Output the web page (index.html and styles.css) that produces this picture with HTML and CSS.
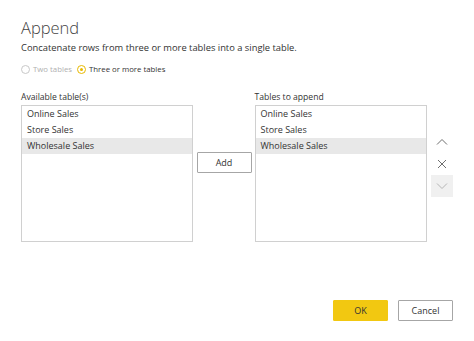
FILE: index.html
```html
<!DOCTYPE html>
<html lang="en">
<head>
    <meta charset="UTF-8">
    <title>Append</title>
    <link rel="stylesheet" href="styles.css">
</head>
<body>
<div class="dialog">
    <h2 class="title">Append</h2>
    <p class="desc">Concatenate rows from three or more tables into a single table.</p>
    <div class="radios">
        <label class="radio disabled"><span class="dot"></span>Two tables</label>
        <label class="radio checked"><span class="dot"></span>Three or more tables</label>
    </div>
    <div class="lists">
        <div class="col">
            <div class="label">Available table(s)</div>
            <ul class="listbox">
                <li>Online Sales</li>
                <li>Store Sales</li>
                <li class="selected">Wholesale Sales</li>
            </ul>
        </div>
        <div class="middle">
            <button class="btn add">Add</button>
        </div>
        <div class="col right">
            <div class="label">Tables to append</div>
            <ul class="listbox">
                <li>Online Sales</li>
                <li>Store Sales</li>
                <li class="selected">Wholesale Sales</li>
            </ul>
        </div>
        <div class="tools">
            <span class="tool">
                <svg width="12" height="12" viewBox="0 0 12 12"><path d="M1 8.5 L6 3.5 L11 8.5" fill="none" stroke="#6e6e6e" stroke-width="1"/></svg>
            </span>
            <span class="tool">
                <svg width="12" height="12" viewBox="0 0 12 12"><path d="M2 2 L10 10 M10 2 L2 10" fill="none" stroke="#6e6e6e" stroke-width="1"/></svg>
            </span>
            <span class="tool off">
                <svg width="12" height="12" viewBox="0 0 12 12"><path d="M1 3.5 L6 8.5 L11 3.5" fill="none" stroke="#b5b5b5" stroke-width="1"/></svg>
            </span>
        </div>
    </div>
    <div class="footer">
        <button class="btn ok">OK</button>
        <button class="btn">Cancel</button>
    </div>
</div>
</body>
</html>
```

FILE: styles.css
```css
* { box-sizing: border-box; }
body {
    margin: 0;
    background: #fff;
    font-family: "Open Sans", "Noto Sans", Arial, sans-serif;
    color: #333;
}
.dialog {
    width: 474px;
    height: 341px;
    padding: 16px 21px 0 21px;
}
.title {
    margin: 0;
    font-size: 16.5px;
    font-weight: 300;
    color: #444;
    line-height: 24px;
}
.desc {
    margin: 1px 0 0 0;
    font-size: 9.35px;
    line-height: 14px;
}
.radios {
    display: flex;
    gap: 5px;
    margin-top: 7px;
    font-size: 7.8px;
    line-height: 14px;
}
.radio {
    display: flex;
    align-items: center;
    gap: 3px;
}
.radio .dot {
    width: 9px;
    height: 9px;
    border: 1px solid #c8c8c8;
    border-radius: 50%;
    position: relative;
}
.radio.disabled { color: #b0b0b0; }
.radio.checked .dot { border-color: #e8b900; }
.radio.checked .dot::after {
    content: "";
    position: absolute;
    left: 2px;
    top: 2px;
    width: 3px;
    height: 3px;
    border-radius: 50%;
    background: #e8b900;
}
.lists {
    display: flex;
    margin-top: 14px;
}
.col { width: 172px; }
.col.right { width: 173px; }
.label {
    font-size: 8.6px;
    line-height: 15px;
}
.listbox {
    list-style: none;
    margin: 0;
    padding: 0;
    height: 137px;
    border: 1px solid #d0d0d0;
}
.listbox li {
    height: 16px;
    line-height: 16px;
    padding-left: 5px;
    font-size: 9px;
}
.listbox li.selected { background: #e8e8e8; }
.middle {
    width: 62px;
    padding: 59px 3px 0 4px;
}
.btn {
    width: 55px;
    height: 21px;
    padding: 0;
    background: #fff;
    border: 1px solid #a6a6a6;
    border-radius: 1px;
    font-family: inherit;
    font-size: 9px;
    color: #333;
}
.tools {
    display: flex;
    flex-direction: column;
    margin: 41px 0 0 4px;
}
.tool {
    width: 22px;
    height: 22px;
    display: flex;
    align-items: center;
    justify-content: center;
}
.tool.off { background: #f0f0f0; }
.footer {
    display: flex;
    justify-content: flex-end;
    gap: 10px;
    margin-top: 58px;
}
.btn.ok {
    background: #f2c811;
    border-color: #f2c811;
}
```
